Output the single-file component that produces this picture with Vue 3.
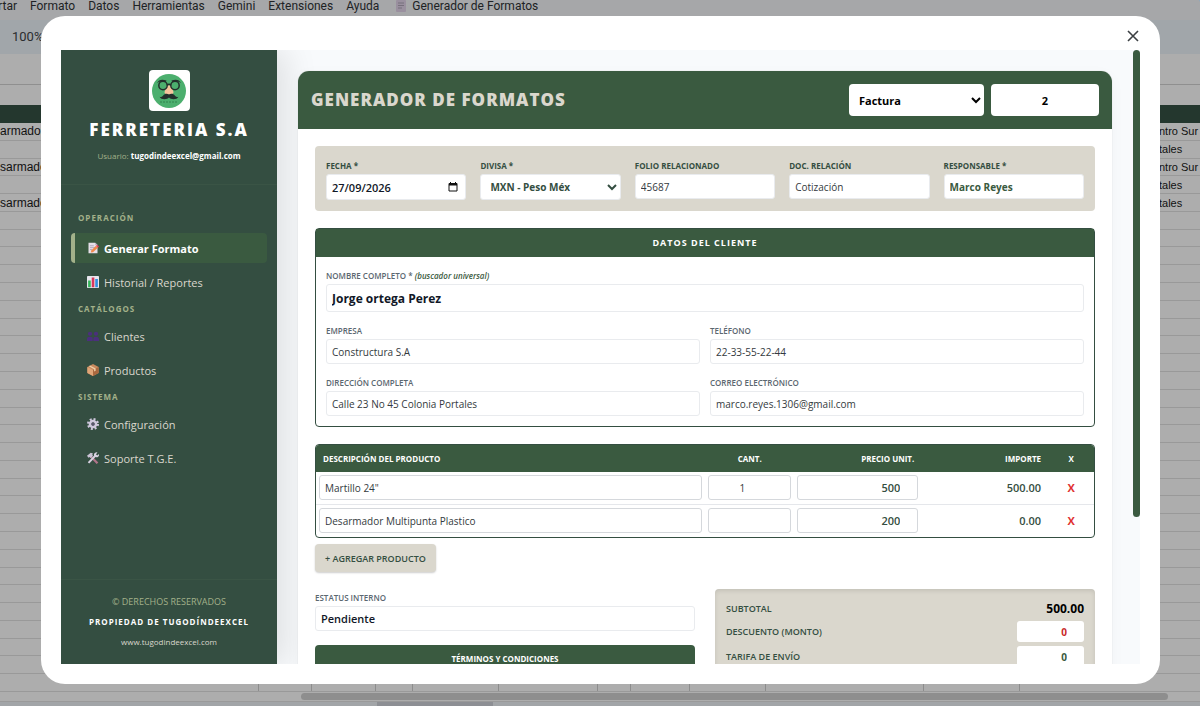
<template>
  <div class="page">

    <!-- Spreadsheet behind the dialog -->
    <div class="sheet">
      <div class="menubar">
        <span class="menu-item cut">Insertar</span>
        <span v-for="m in menus" :key="m" class="menu-item">{{ m }}</span>
        <span class="menu-item addon">
          <svg width="10" height="12" viewBox="0 0 10 12"><rect width="10" height="12" rx="1" fill="#9a909f" /><path d="M2 3h6M2 5.500h6M2 8h4" stroke="#77707c" /></svg>
          Generador de Formatos
        </span>
        <span class="avatar" />
      </div>
      <div class="toolbar">100%</div>
      <div class="formula" />
      <div class="letters" />
      <div class="head-row" />
      <div class="rows">
        <div v-for="(r, i) in rows" :key="i" class="row">
          <span class="cell-left">{{ r[0] }}</span>
          <span class="cell-right">{{ r[1] }}</span>
        </div>
        <div class="row">
          <span v-for="(w, i) in columns" :key="i" class="col" :style="{ width: w + '%' }" />
        </div>
      </div>
      <div class="hscroll"><div class="hthumb" /></div>
      <div class="tabs"><div class="tab" /></div>
    </div>

    <div class="dialog" role="dialog">
      <button class="close" aria-label="Cerrar">
        <svg width="12" height="12" viewBox="0 0 12 12" fill="none" stroke="#3c4043" stroke-width="1.6"><path d="M1 1l10 10M11 1L1 11" /></svg>
      </button>

      <div class="app">
        <aside class="sidebar">
          <div class="brand">
            <div class="logo">
              <svg width="34" height="34" viewBox="0 0 34 34">
                <circle cx="17" cy="17" r="17" fill="#4caf6e" />
                <path d="M15 11.500h4l2.500 6.500c.5 3.500-9.500 3.500-9 0z" fill="#f5c49c" />
                <g fill="none" stroke="#22302c" stroke-width="1.500">
                  <circle cx="11" cy="11.500" r="4.200" /><circle cx="23" cy="11.500" r="4.200" />
                  <path d="M15 11q2-1.500 4 0" />
                </g>
                <path d="M5 9q2.500-5 9.500-2.500l-1 2q-4-2-8.500.5zM29 9q-2.500-5-9.500-2.500l1 2q4-2 8.500.5z" fill="#22302c" />
                <path d="M17 20.500c-2-1.200-4.500-.7-6 1.200-1 1.200-2.300 1.500-3.500 1 1.500 3.200 7.500 3.200 9.500.8 2 2.400 8 2.400 9.500-.8-1.200.5-2.500.2-3.500-1-1.500-1.900-4-2.400-6-1.200z" fill="#22302c" />
                <path d="M8 28h18" stroke="#3b935a" stroke-width="1.500" stroke-dasharray="2 1" />
              </svg>
            </div>
            <h1>FERRETERIA S.A</h1>
            <p class="user">Usuario: <b>tugodindeexcel@gmail.com</b></p>
          </div>

          <nav class="nav">
            <template v-for="g in nav" :key="g.label">
              <div class="nav-label">{{ g.label }}</div>
              <a v-for="it in g.items" :key="it.text" href="#" class="nav-item" :class="{ active: it.active }">
                <svg class="nav-icon" viewBox="0 0 16 16">
                  <template v-if="it.icon === 'memo'">
                    <path d="M2 1h9l3 3v11H2z" fill="#e6dfe8" /><path d="M11 1v3h3z" fill="#b9acc0" />
                    <path d="M4 5h5M4 7.500h7M4 10h3" stroke="#a79bb0" />
                    <path d="M5 14l1-3 6-6 2.500 2.500-6.500 6z" fill="#f08a4b" /><path d="M12 5l1.500-1.500L16 6l-1.500 1.500z" fill="#e2405a" />
                  </template>
                  <template v-else-if="it.icon === 'chart'">
                    <rect width="16" height="16" rx="1" fill="#e8e6ee" />
                    <rect x="1.500" y="6" width="3.500" height="9" fill="#35b45a" /><rect x="6.300" y="2" width="3.500" height="13" fill="#d8365c" /><rect x="11" y="4" width="3.500" height="11" fill="#2f8fe0" />
                  </template>
                  <g v-else-if="it.icon === 'people'" fill="#4b2f7d">
                    <circle cx="4" cy="5" r="2.800" /><circle cx="12" cy="5" r="2.800" />
                    <path d="M0 14.500V12q0-3 4-3t3.500 3v2.500zM8.500 14.500V12q0-3 3.500-3t4 3v2.500z" />
                  </g>
                  <template v-else-if="it.icon === 'box'">
                    <path d="M8 0l7.500 4v8L8 16 .5 12V4z" fill="#c98a5e" />
                    <path d="M.5 4L8 8v8L.5 12z" fill="#e0a577" /><path d="M8 8l7.500-4v8L8 16z" fill="#a9683f" />
                    <path d="M4 2l7.500 4v3l-2 1V7L2.500 3z" fill="#f0cfa8" />
                  </template>
                  <template v-else-if="it.icon === 'gear'">
                    <circle cx="8" cy="8" r="6.500" fill="none" stroke="#cfc8dd" stroke-width="3" stroke-dasharray="2.600 2.500" />
                    <circle cx="8" cy="8" r="4" fill="none" stroke="#cfc8dd" stroke-width="3.500" />
                    <circle cx="8" cy="8" r="2" fill="#5c5470" />
                  </template>
                  <template v-else>
                    <path d="M4 5l10 10" stroke="#b0748a" stroke-width="3" />
                    <path d="M12 4L2 14.500" stroke="#d9d3e2" stroke-width="2.600" />
                    <path d="M0 5l5-4 3 1-1 1.500L8 5 5 8 3.500 6.500 2 7.500z" fill="#cbc4d6" />
                    <path d="M10 1.500Q12 0 14 .5L12 3l1.500 1.500L16 2.500q.5 3-1.500 4t-4.500-.5q-1.500-2.500 0-4.500z" fill="#d9d3e2" />
                  </template>
                </svg>
                {{ it.text }}
              </a>
            </template>
          </nav>

          <footer class="side-foot">
            <p class="rights">© DERECHOS RESERVADOS</p>
            <p class="owner">PROPIEDAD DE TUGODÍNDEEXCEL</p>
            <p class="site">www.tugodindeexcel.com</p>
          </footer>
        </aside>

        <main class="main">
          <div class="card">
            <header class="card-head">
              <h2>GENERADOR DE FORMATOS</h2>
              <select v-model="tipo" class="doc-type" aria-label="Tipo de documento">
                <option>Factura</option>
              </select>
              <input v-model="folio" class="doc-num" type="text" aria-label="Folio">
            </header>

            <div class="card-body">
              <section class="meta">
                <div class="field">
                  <label for="fecha">FECHA *</label>
                  <div class="date-box">
                    <input id="fecha" v-model="fecha" type="text">
                    <button aria-label="Abrir calendario">
                      <svg width="10" height="10" viewBox="0 0 10 10"><path d="M1 1.500h8v7.500H1z" fill="none" stroke="#111" /><path d="M1 1h8v2.500H1zM2 0h1v1H2zM7 0h1v1H7z" fill="#111" /></svg>
                    </button>
                  </div>
                </div>
                <div class="field">
                  <label for="divisa">DIVISA *</label>
                  <select id="divisa" v-model="divisa" class="currency">
                    <option>MXN - Peso Méx</option>
                  </select>
                </div>
                <div class="field">
                  <label for="rel">FOLIO RELACIONADO</label>
                  <input id="rel" type="text" value="45687">
                </div>
                <div class="field">
                  <label for="doc">DOC. RELACIÓN</label>
                  <input id="doc" type="text" value="Cotización">
                </div>
                <div class="field">
                  <label for="resp">RESPONSABLE *</label>
                  <input id="resp" class="green" type="text" value="Marco Reyes">
                </div>
              </section>

              <section class="client">
                <h3>DATOS DEL CLIENTE</h3>
                <div class="client-grid">
                  <div class="field wide">
                    <label for="nombre">NOMBRE COMPLETO * <em>(buscador universal)</em></label>
                    <input id="nombre" class="name" type="text" value="Jorge ortega Perez">
                  </div>
                  <div v-for="f in clientFields" :key="f.id" class="field">
                    <label :for="f.id">{{ f.label }}</label>
                    <input :id="f.id" v-model="f.value" type="text">
                  </div>
                </div>
              </section>

              <div class="products">
                <table>
                  <thead>
                    <tr>
                      <th class="c-desc">DESCRIPCIÓN DEL PRODUCTO</th>
                      <th class="c-qty">CANT.</th>
                      <th class="c-num">PRECIO UNIT.</th>
                      <th class="c-num">IMPORTE</th>
                      <th class="c-del">X</th>
                    </tr>
                  </thead>
                  <tbody>
                    <tr v-for="(p, i) in products" :key="i">
                      <td><input v-model="p.desc" type="text" aria-label="Descripción"></td>
                      <td><input v-model="p.qty" class="qty" type="number" aria-label="Cantidad"></td>
                      <td><input v-model="p.price" class="price" type="number" aria-label="Precio"></td>
                      <td class="amount">{{ amount(p) }}</td>
                      <td class="del"><button @click="products.splice(i, 1)">X</button></td>
                    </tr>
                  </tbody>
                </table>
              </div>
              <button class="add" @click="addProduct">+ AGREGAR PRODUCTO</button>

              <div class="bottom">
                <div class="left-col">
                  <div class="field">
                    <label for="estatus">ESTATUS INTERNO</label>
                    <input id="estatus" class="status" type="text" value="Pendiente">
                  </div>
                  <div class="terms">
                    <label for="terminos">TÉRMINOS Y CONDICIONES</label>
                    <textarea id="terminos" rows="4" />
                  </div>
                </div>
                <div class="totals">
                  <div class="total-row first"><span>SUBTOTAL</span><strong>{{ subtotal }}</strong></div>
                  <div class="total-row"><label for="desc">DESCUENTO (MONTO)</label><input id="desc" v-model="discount" class="red" type="number"></div>
                  <div class="total-row"><label for="envio">TARIFA DE ENVÍO</label><input id="envio" v-model="shipping" type="number"></div>
                </div>
              </div>
            </div>
          </div>
        </main>
        <div class="vscroll"><div class="vthumb" /></div>
      </div>
    </div>
  </div>
</template>

<script setup>
import { ref, computed } from 'vue'

const menus = ['Formato', 'Datos', 'Herramientas', 'Gemini', 'Extensiones', 'Ayuda']

const rows = Array.from({ length: 31 }, () => ['', ''])
rows[0] = ['armador', 'ntro Sur']
rows[1] = ['', 'tales']
rows[2] = ['sarmador', 'ntro Sur']
rows[3] = ['', 'tales']
rows[4] = ['sarmador', 'tales']

// sheet column widths, in percent
const columns = [21.6, 4.4, 5.3, 3.1, 7.2, 8.2, 2.8, 4.9, 6.3, 13.2, 8]

const nav = [
  { label: 'OPERACIÓN', items: [
    { icon: 'memo', text: 'Generar Formato', active: true },
    { icon: 'chart', text: 'Historial / Reportes' },
  ] },
  { label: 'CATÁLOGOS', items: [
    { icon: 'people', text: 'Clientes' },
    { icon: 'box', text: 'Productos' },
  ] },
  { label: 'SISTEMA', items: [
    { icon: 'gear', text: 'Configuración' },
    { icon: 'tools', text: 'Soporte T.G.E.' },
  ] },
]

const tipo = ref('Factura')
const folio = ref('2')
const fecha = ref('27/09/2026')
const divisa = ref('MXN - Peso Méx')
const discount = ref(0)
const shipping = ref(0)

const clientFields = ref([
  { id: 'empresa', label: 'EMPRESA', value: 'Constructura S.A' },
  { id: 'tel', label: 'TELÉFONO', value: '22-33-55-22-44' },
  { id: 'dir', label: 'DIRECCIÓN COMPLETA', value: 'Calle 23 No 45 Colonia Portales' },
  { id: 'mail', label: 'CORREO ELECTRÓNICO', value: 'marco.reyes.1306@gmail.com' },
])

const products = ref([
  { desc: 'Martillo 24"', qty: 1, price: 500 },
  { desc: 'Desarmador Multipunta Plastico', qty: '', price: 200 },
])

const amount = (p) => (Number(p.qty) * Number(p.price)).toFixed(2)
const subtotal = computed(() => products.value.reduce((s, p) => s + Number(amount(p)), 0).toFixed(2))

function addProduct() {
  products.value.push({ desc: '', qty: '', price: '' })
}
</script>

<style>
body { margin: 0; }
</style>

<style scoped>
* { box-sizing: border-box; }
h1, h2, h3, p { margin: 0; }
button, input, select, textarea { font-family: inherit; margin: 0; }
button { cursor: pointer; }

.page {
  position: relative;
  height: 100vh;
  overflow: hidden;
  font-family: 'Open Sans', 'Noto Sans', sans-serif;
}

/* sheet */
.sheet {
  height: 100%;
  display: flex;
  flex-direction: column;
  background: #adadad;
  font-family: 'Liberation Sans', Arial, sans-serif;
  font-size: 12px;
  color: #111;
}
.menubar {
  flex: 0 0 20px;
  display: flex;
  gap: 13px;
  background: #a6a7a9;
  font-family: Roboto, sans-serif;
  font-size: 12px;
  line-height: 12px;
  color: #202224;
  white-space: nowrap;
  overflow: hidden;
}
.menu-item.cut { width: 17px; display: flex; justify-content: flex-end; }
.addon { display: flex; gap: 6px; margin-left: 4px; }
.avatar { width: 24px; height: 24px; margin: -17px -22px 0 auto; border-radius: 50%; background: #84a9c4; flex: none; }
.toolbar {
  flex: 0 0 34px;
  padding-left: 12px;
  background: #a1a6aa;
  font-family: Roboto, sans-serif;
  font-size: 13px;
  line-height: 34px;
  color: #2b2d2f;
}
.formula { flex: 0 0 31px; border-bottom: 1px solid #8f8f8f; }
.letters { flex: 0 0 20px; }
.head-row { flex: 0 0 18px; background: #24372e; }
.rows { flex: 1; display: flex; flex-direction: column; }
.row {
  flex: 1;
  min-height: 0;
  display: flex;
  align-items: center;
  border-bottom: 1px solid #999;
  white-space: nowrap;
}
.cell-left { width: 44px; }
.cell-right { width: 41px; margin-left: auto; font-size: 11px; }
.col { height: 100%; border-right: 1px solid #8d8d8d; }
.hscroll { flex: 0 0 10px; padding: 1px 32px 1px 301px; border-bottom: 1px solid #9a9a9a; }
.hthumb { height: 7px; border-radius: 4px; background: #8e8e8e; }
.tabs { flex: 0 0 4px; background: #a2a5a8; display: flex; }
.tab { width: 116px; margin-left: 377px; background: #8d8f94; }

/* dialog */
.dialog {
  position: absolute;
  inset: 16px 40px 22px 41px;
  display: flex;
  flex-direction: column;
  padding: 0 20px 20px;
  background: #fff;
  border-radius: 24px;
}
.close {
  flex: 0 0 34px;
  align-self: flex-end;
  display: flex;
  align-items: center;
  padding: 6px 1px 0;
  border: 0;
  background: none;
}
.app {
  flex: 1;
  min-height: 0;
  display: flex;
  overflow: hidden;
  background: #f8fafc;
}

/* sidebar */
.sidebar {
  flex: 0 0 216px;
  display: flex;
  flex-direction: column;
  background: #344e41;
  color: #fff;
  box-shadow: 10px 0 30px rgba(0, 0, 0, 0.1);
}
.brand {
  display: flex;
  flex-direction: column;
  align-items: center;
  padding: 20px 10px 21px;
  border-bottom: 1px solid #3a5445;
}
.logo {
  display: flex;
  align-items: center;
  justify-content: center;
  width: 41px;
  height: 41px;
  background: #fff;
  border-radius: 4px;
}
.brand h1 {
  margin-top: 8px;
  font-size: 17px;
  line-height: 22px;
  font-weight: 800;
  letter-spacing: 2px;
}
.user { margin-top: 8px; font-size: 8px; line-height: 14px; color: #a3b18a; }
.user b { color: #fff; }
.nav { flex: 1; padding: 21px 10px; }
.nav-label {
  padding: 0 7px 4px;
  font-size: 8px;
  line-height: 16px;
  font-weight: 700;
  letter-spacing: 1px;
  color: #a3b18a;
}
.nav-label:first-child { padding: 4px 7px 7px; }
.nav-item {
  display: flex;
  align-items: center;
  gap: 5px;
  height: 30px;
  margin-bottom: 4px;
  padding-left: 12px;
  border-left: 4px solid transparent;
  border-radius: 4px;
  font-size: 11px;
  color: #dad7cd;
  text-decoration: none;
}
.nav-item.active { background: #3a5a40; border-left-color: #a3b18a; color: #fff; font-weight: 700; }
.nav-icon { width: 12px; height: 12px; }
.side-foot {
  padding: 14px 10px 14px;
  border-top: 1px solid #3a5445;
  text-align: center;
  font-size: 8px;
  line-height: 16px;
}
.side-foot p + p { margin-top: 4px; }
.rights { color: #a3b18a; font-size: 9px; }
.owner { font-weight: 700; letter-spacing: 1px; }
.site { color: #dad7cd; }

/* card */
.main { flex: 1; min-width: 0; padding: 21px; overflow-y: auto; scrollbar-width: none; }
.card {
  background: #fff;
  border-radius: 11px;
  box-shadow: 0 0 1px rgba(0, 0, 0, 0.25), 0 4px 16px rgba(0, 0, 0, 0.03);
}
.card-head {
  display: flex;
  align-items: center;
  gap: 7px;
  padding: 13px;
  background: #3a5a40;
  border-radius: 11px 11px 0 0;
}
.card-head h2 {
  flex: 1;
  font-size: 17px;
  line-height: 24px;
  font-weight: 800;
  letter-spacing: 1px;
  color: #dad7cd;
}
.doc-type, .doc-num {
  height: 32px;
  border: 0;
  border-radius: 4px;
  background: #fff;
  font-size: 11px;
  font-weight: 700;
  color: #000;
}
.doc-type { width: 135px; padding: 0 6px; }
.doc-num { width: 108px; text-align: center; }
.card-body { padding: 17px; }

.field { min-width: 0; }
.field label {
  display: block;
  font-size: 8px;
  line-height: 17px;
  font-weight: 600;
  color: #5b6770;
  white-space: nowrap;
}
.field input, .field select, .date-box, td input {
  display: block;
  width: 100%;
  height: 25px;
  padding: 0 5px;
  border: 1px solid #e9ebee;
  border-radius: 3px;
  background: #fff;
  font-size: 10px;
  color: #343a40;
}

.meta {
  display: grid;
  grid-template-columns: repeat(5, 1fr);
  gap: 14px;
  padding: 11px;
  background: #dad7cd;
  border-radius: 4px;
}
.meta label { font-weight: 700; color: #344e41; }
.meta .date-box { display: flex; align-items: center; height: 26px; padding-right: 7px; }
.meta .date-box input { flex: 1; min-width: 0; border: 0; padding: 0; height: 22px; font-size: 11px; font-weight: 600; color: #111827; }
.date-box button { display: flex; padding: 0; border: 0; background: none; }
.meta .currency { height: 26px; font-size: 10px; font-weight: 700; color: #344e41; }
.field .green { font-weight: 700; color: #3a5a40; }

.client { margin-top: 17px; border: 1px solid #344e41; border-radius: 4px; }
.client h3 {
  background: #3a5a40;
  color: #fff;
  text-align: center;
  font-size: 9px;
  line-height: 28px;
  font-weight: 700;
  letter-spacing: 1px;
}
.client-grid { display: grid; grid-template-columns: 1fr 1fr; gap: 10px; padding: 10px; }
.wide { grid-column: 1 / 3; }
.client em { color: #3a5a40; }
.field .name { height: 28px; font-size: 12px; font-weight: 700; color: #111827; }

.products { margin-top: 17px; border: 1px solid #344e41; border-radius: 4px; overflow: hidden; }
table { width: 100%; border-collapse: collapse; table-layout: fixed; }
th {
  height: 27px;
  padding: 0 7px;
  background: #3a5a40;
  color: #fff;
  font-size: 8px;
  font-weight: 700;
}
.c-desc { width: 50%; text-align: left; }
.c-qty { width: 11.5%; }
.c-num { width: 16.3%; text-align: right; }
.c-del { width: 5.9%; }
td { padding: 3px 3px 4px; border-bottom: 1px solid #e5e7eb; }
tr:last-child td { border-bottom: 0; }
td input { border-color: #d5d8dc; }
.qty { text-align: center; }
td .price { padding-right: 2px; text-align: right; font-size: 11px; font-weight: 600; color: #344e41; }
.amount { padding-right: 7px; text-align: right; font-size: 11px; font-weight: 600; color: #344e41; }
.del button { display: block; margin: 0 auto; padding: 0; border: 0; background: none; font-size: 11px; font-weight: 700; color: #e03131; }

.add {
  display: block;
  height: 28px;
  margin-top: 6px;
  padding: 0 10px;
  border: 0;
  border-radius: 4px;
  background: #dad7cd;
  box-shadow: 0 1px 2px rgba(0, 0, 0, 0.2);
  font-size: 9px;
  font-weight: 600;
  color: #344e41;
}

.bottom { display: grid; grid-template-columns: 1fr 1fr; gap: 20px; margin-top: 17px; }
.field .status { font-size: 11px; font-weight: 600; color: #111827; }
.terms { margin-top: 14px; }
.terms label {
  display: block;
  background: #3a5a40;
  border-radius: 4px 4px 0 0;
  color: #fff;
  text-align: center;
  font-size: 8px;
  line-height: 27px;
  font-weight: 700;
}
.terms textarea { display: block; width: 100%; border: 1px solid #e9ebee; }
.totals {
  padding: 11px;
  background: #dad7cd;
  border-radius: 4px;
  box-shadow: inset 0 2px 4px rgba(0, 0, 0, 0.1);
}
.total-row {
  display: flex;
  align-items: center;
  justify-content: space-between;
  margin-bottom: 4px;
  font-size: 9px;
  font-weight: 600;
  line-height: 21px;
  color: #344e41;
}
.total-row.first { line-height: 17px; }
.total-row strong { font-size: 12px; font-weight: 700; color: #000; }
.total-row input {
  width: 67px;
  height: 21px;
  padding: 0 2px 0 0;
  border: 0;
  border-radius: 3px;
  background: #fff;
  text-align: right;
  font-size: 10px;
  font-weight: 700;
  color: #3a5a40;
}
.total-row .red { color: #c92a2a; }

.vscroll { flex: 0 0 7px; }
.vthumb { height: 76%; border-radius: 4px; background: #3a5a40; }
</style>
